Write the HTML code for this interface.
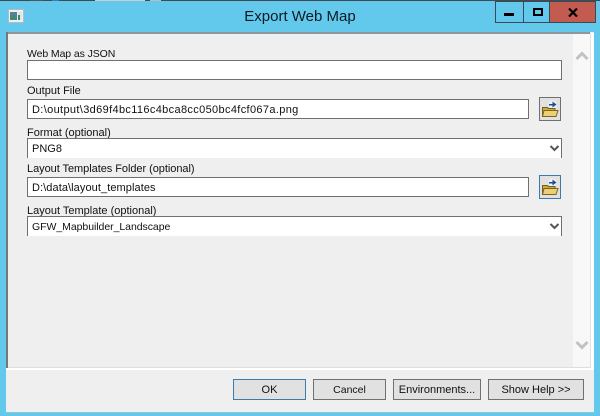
<!DOCTYPE html>
<html>
<head>
<meta charset="utf-8">
<style>
html,body{margin:0;padding:0;}
body{width:600px;height:416px;position:relative;overflow:hidden;background:#63c9ec;font-family:"Liberation Sans",sans-serif;font-size:11px;color:#111;}
div,span{position:absolute;box-sizing:border-box;}
.lbl{left:27px;white-space:nowrap;line-height:13px;height:13px;}
.in{background:#fff;border:1px solid #707070;height:20px;padding-left:4px;line-height:21px;white-space:nowrap;color:#111;}
.sel{background:#fff;border:1px solid #707070;border-bottom:0;left:27px;width:535px;height:20px;padding-left:4px;line-height:21px;white-space:nowrap;}
.btn{background:#e1e1e1;border:1px solid #707070;top:379px;height:21px;text-align:center;line-height:21px;white-space:nowrap;color:#111;}
.br{left:539px;width:22px;height:24px;background:#e1e1e1;border:1px solid #707070;}
</style>
</head>
<body>
<div style="left:0;top:0;width:600px;height:1px;background:#404a50;"></div>
<div style="left:30px;top:0;width:13px;height:1px;background:#555;"></div>
<div style="left:52px;top:0;width:7px;height:1px;background:#3a7ab0;"></div>
<div style="left:95px;top:0;width:50px;height:1px;background:#ccc;"></div>
<div style="left:150px;top:0;width:11px;height:1px;background:#bbb;"></div>

<svg style="position:absolute;left:8px;top:9px" width="16" height="14" viewBox="0 0 16 14">
<rect x=".5" y=".5" width="15" height="13" fill="#eef1f2" stroke="#b0bcc4"/>
<rect x="2" y="3" width="7" height="8" fill="#3f8a7c"/>
<rect x="2" y="3" width="7" height="3" fill="#5c7f9a"/>
<rect x="10" y="3" width="4" height="8" fill="#dfe7e4"/>
<rect x="10" y="6" width="2" height="5" fill="#3c7f86"/>
</svg>

<div style="left:0;width:600px;top:7px;text-align:center;font-size:15px;line-height:20px;color:#0c1a22;">Export Web Map</div>

<div style="left:495px;top:1px;width:29px;height:22px;border:1px solid #3a4a55;"></div>
<div style="left:523px;top:1px;width:27px;height:22px;border:1px solid #3a4a55;"></div>
<div style="left:549px;top:1px;width:47px;height:22px;background:#c45b51;border:1px solid #3a4a55;"></div>
<div style="left:504px;top:13px;width:10px;height:3px;background:#000;"></div>
<div style="left:533px;top:8px;width:10px;height:8px;border:2px solid #000;"></div>
<svg style="position:absolute;left:568px;top:8px" width="10" height="9" viewBox="0 0 10 9"><path d="M1 .5L9 8.5M9 .5L1 8.5" stroke="#000" stroke-width="2.2" fill="none"/></svg>

<!-- window body -->
<div style="left:6px;top:32px;width:588px;height:380px;background:#efefef;"></div>
<div style="left:6px;top:32px;width:584px;height:2px;background:#8f979c;"></div>
<div style="left:6px;top:32px;width:2px;height:336px;background:#75797c;"></div>
<div style="left:590px;top:33px;width:4px;height:336px;background:#fff;"></div>
<div style="left:590px;top:33px;width:1px;height:336px;background:#e2e2e2;"></div>
<div style="left:573px;top:34px;width:17px;height:334px;background:#f8f8f8;"></div>
<div style="left:8px;top:367px;width:582px;height:1px;background:#dedede;"></div>
<div style="left:6px;top:368px;width:588px;height:2px;background:#fff;"></div>
<div style="left:6px;top:412px;width:588px;height:1px;background:#8fc4d9;"></div>

<svg style="position:absolute;left:575px;top:50px" width="14" height="11" viewBox="0 0 14 11"><path d="M1.5 9L7 3.5L12.5 9" stroke="#c2c2c2" stroke-width="3" fill="none"/></svg>
<svg style="position:absolute;left:575px;top:340px" width="14" height="11" viewBox="0 0 14 11"><path d="M1.5 2L7 7.5L12.5 2" stroke="#c2c2c2" stroke-width="3" fill="none"/></svg>

<div class="lbl" style="top:48px;font-size:10.5px;letter-spacing:-.1px;">Web Map as JSON</div>
<div class="in" style="left:27px;top:60px;width:535px;"></div>

<div class="lbl" style="top:85px;">Output File</div>
<div class="in" style="left:27px;top:99px;width:502px;letter-spacing:.35px;">D:\output\3d69f4bc116c4bca8cc050bc4fcf067a.png</div>
<div class="br" style="top:97px;"></div>

<div class="lbl" style="top:127px;">Format (optional)</div>
<div class="sel" style="top:138px;">PNG8</div>
<svg style="position:absolute;left:549px;top:144px" width="11" height="9" viewBox="0 0 11 9"><path d="M1.5 2L5.5 6L9.5 2" stroke="#555" stroke-width="2" fill="none"/></svg>

<div class="lbl" style="top:163px;letter-spacing:-.05px;">Layout Templates Folder (optional)</div>
<div class="in" style="left:27px;top:177px;width:502px;letter-spacing:.08px;">D:\data\layout_templates</div>
<div class="br" style="top:175px;border-color:#3a7cae;"></div>

<div class="lbl" style="top:205px;">Layout Template (optional)</div>
<div class="sel" style="top:216px;font-size:10.5px;letter-spacing:-.05px;">GFW_Mapbuilder_Landscape</div>
<svg style="position:absolute;left:549px;top:222px" width="11" height="9" viewBox="0 0 11 9"><path d="M1.5 2L5.5 6L9.5 2" stroke="#555" stroke-width="2" fill="none"/></svg>

<svg style="position:absolute;left:541px;top:100px" width="18" height="18" viewBox="0 0 18 18">
<circle cx="11.500" cy="4.500" r="4" fill="#f0f2f3"/>
<path d="M8 4h3.500V1.500l4 3-4 3V5.500H8z" fill="#1a4f96"/>
<path d="M1.500 7.500h5l1 1h6.500v7.500H1.500z" fill="#cfa93f" stroke="#75601f"/>
<path d="M1.500 16.500L3 10.500h14L15 16.500z" fill="#ecd075" stroke="#7d6420"/>
</svg>
<svg style="position:absolute;left:541px;top:178px" width="18" height="18" viewBox="0 0 18 18">
<circle cx="11.500" cy="4.500" r="4" fill="#f0f2f3"/>
<path d="M8 4h3.500V1.500l4 3-4 3V5.500H8z" fill="#1a4f96"/>
<path d="M1.500 7.500h5l1 1h6.500v7.500H1.500z" fill="#cfa93f" stroke="#75601f"/>
<path d="M1.500 16.500L3 10.500h14L15 16.500z" fill="#ecd075" stroke="#7d6420"/>
</svg>

<div class="btn" style="left:233px;width:73px;border-color:#3a7cae;">OK</div>
<div class="btn" style="left:313px;width:73px;font-size:10.5px;">Cancel</div>
<div class="btn" style="left:393px;width:88px;">Environments...</div>
<div class="btn" style="left:488px;width:96px;">Show Help &gt;&gt;</div>
</body>
</html>
